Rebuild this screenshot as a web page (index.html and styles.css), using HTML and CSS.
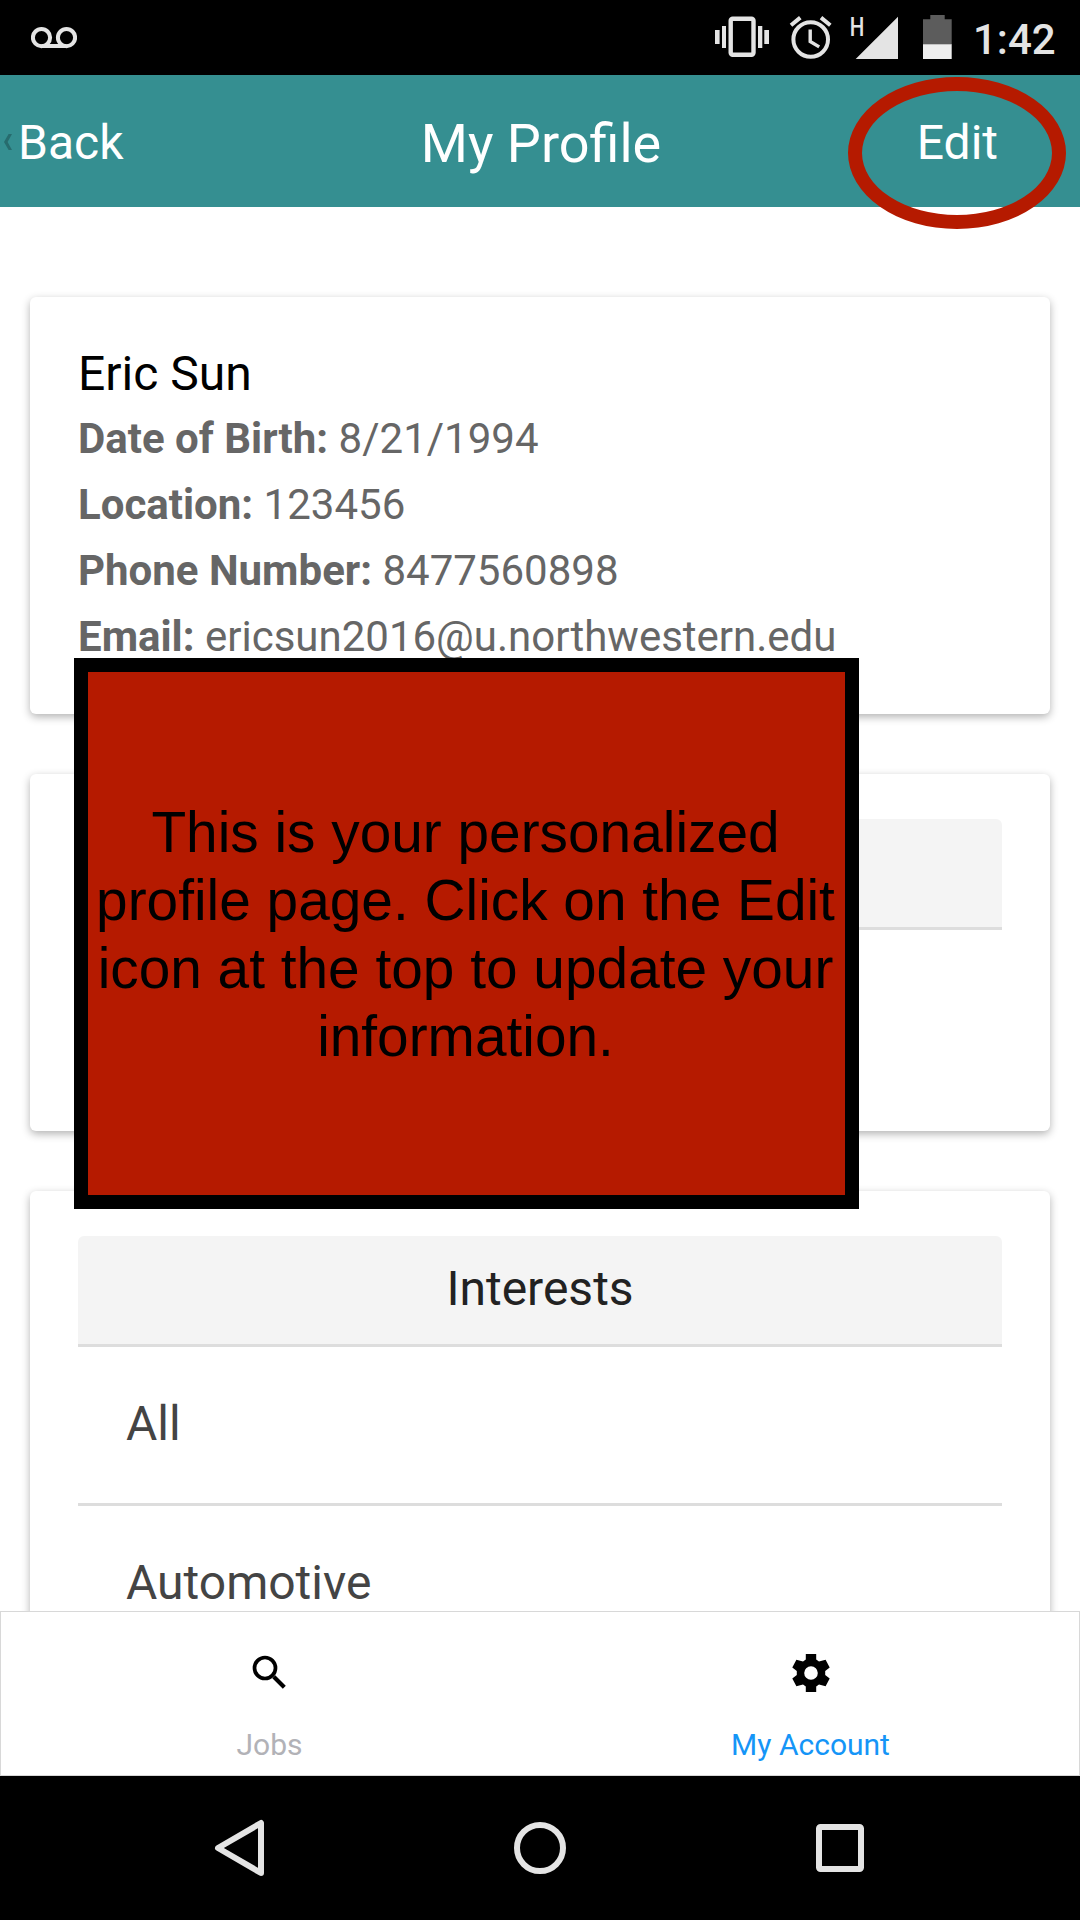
FILE: index.html
```html
<!DOCTYPE html>
<html lang="en">
<head>
<meta charset="utf-8">
<title>My Profile</title>
<link rel="stylesheet" href="styles.css">
</head>
<body>
<div class="screen">
  <div class="status-bar">
    <svg class="status-left" width="46" height="22" viewBox="31 26 46 22" fill="none" stroke="#e4e4e4" stroke-width="4">
      <circle cx="41.5" cy="36.6" r="8.6"/><circle cx="66.5" cy="36.6" r="8.6"/><path d="M41.5 45h25"/>
    </svg>
    <svg class="status-icons" width="240" height="75" viewBox="714 0 240 75">
      <g fill="#e4e4e4">
        <path d="M715 30h4.6v14H715zM722 26h4v22h-4zM758 26h4.3v22H758zM764.3 30h4.7v14h-4.7z"/>
        <path d="M855.7 59L898 16.7V59z"/>
      </g>
      <g fill="none" stroke="#e4e4e4" stroke-width="4.4">
        <rect x="730.7" y="18.8" width="22.8" height="36" rx="2"/>
        <circle cx="810.7" cy="39.5" r="17.3" stroke-width="4"/>
        <path d="M810.2 29.5v12l9 5.4" stroke-width="3.4"/>
        <path d="M791 25.3l9.3-7.7M821 17.6l9.3 7.7" stroke-width="4"/>
      </g>
      <text class="network" transform="translate(849.8 35.6) scale(.79 1)">H</text>
      <path fill="#5c5c5c" d="M930.3 15h14.4v4.3h7V45H923V19.3h7.3z"/>
      <path fill="#eee" d="M923 44.3h28.7V59H923z"/>
    </svg>
    <span class="clock">1:42</span>
  </div>

  <header class="header">
    <div class="header-back">
      <svg width="8" height="16" viewBox="0 0 8 16" fill="#276c6e"><path d="M4.6 0H8L3.6 8 8 16H4.6L0 8z"/></svg>
      <span>Back</span>
    </div>
    <h1 class="header-title">My Profile</h1>
    <span class="header-edit">Edit</span>
  </header>

  <main class="content">
    <section class="card card-profile">
      <h2 class="name">Eric Sun</h2>
      <p><b>Date of Birth:</b> 8/21/1994</p>
      <p><b>Location:</b> 123456</p>
      <p><b>Phone Number:</b> 8477560898</p>
      <p><b>Email:</b> ericsun2016@u.northwestern.edu</p>
    </section>
    <section class="card card-empty">
      <div class="card-heading"></div>
    </section>
    <section class="card">
      <div class="card-heading">Interests</div>
      <div class="row">All</div>
      <div class="row">Automotive</div>
    </section>
  </main>

  <nav class="tabs">
    <div class="tab tab-jobs">
      <svg width="44" height="44" viewBox="-22 -22 44 44" fill="none" stroke="#000">
        <circle cx="-5" cy="-5" r="10.5" stroke-width="3.7"/><path d="M3.8 3.8L14.3 14.3" stroke-width="4.2"/>
      </svg>
      <span>Jobs</span>
    </div>
    <div class="tab tab-active">
      <svg width="44" height="44" viewBox="-22 -22 44 44">
        <path fill-rule="evenodd" d="M-5.2-19H5.2V-13.4L8-11.4 14.6-13.2 18.7-5.6 14.2-2V2L18.7 5.6 14.6 13.2 8 11.4 5.2 13.4V19H-5.2V13.4L-8 11.4-14.6 13.2-18.7 5.6-14.2 2V-2L-18.7-5.6-14.6-13.2-8-11.4-5.2-13.4zM-6.8 0a6.8 6.8 0 1 0 13.6 0a6.8 6.8 0 1 0-13.6 0z"/>
      </svg>
      <span>My Account</span>
    </div>
  </nav>

  <div class="nav-bar">
    <svg width="60" height="60" viewBox="-30 -30 60 60"><path d="M21-25V25L-22 0z"/></svg>
    <svg width="60" height="60" viewBox="-30 -30 60 60"><circle r="23"/></svg>
    <svg width="60" height="60" viewBox="-30 -30 60 60"><rect x="-21" y="-21" width="42" height="42" rx="1.5"/></svg>
  </div>

  <div class="edit-ring"></div>
  <div class="callout">
    <span>This is your personalized</span>
    <span>profile page. Click on the Edit</span>
    <span>icon at the top to update your</span>
    <span>information.</span>
  </div>
</div>
</body>
</html>
```

FILE: styles.css
```css
* { box-sizing: border-box; }
body { margin: 0; font-family: Roboto, sans-serif; background: #fff; }
h1, h2, p { margin: 0; font-weight: 400; }
svg { display: block; flex: none; }

.screen {
  position: relative;
  width: 1080px;
  height: 1920px;
  overflow: hidden;
  display: flex;
  flex-direction: column;
}

.status-bar {
  flex: none;
  height: 75px;
  background: #000;
  display: flex;
  align-items: center;
  padding: 0 24px 0 31px;
}
.status-icons { margin-left: auto; margin-right: 19px; }
.network { font-size: 26px; font-weight: 500; fill: #e4e4e4; }
.clock {
  width: 83px;
  font-size: 42px;
  line-height: 48px;
  font-weight: 500;
  color: #e4e4e4;
  padding-top: 4px;
}

.header {
  flex: none;
  height: 132px;
  background: #358f91;
  color: #fff;
  display: grid;
  grid-template-columns: 1fr auto 1fr;
  align-items: center;
  padding: 4px 4px 0;
  font-size: 48px;
}
.header-back { display: flex; align-items: center; gap: 6px; padding-bottom: 2px; }
.header-title { font-size: 54px; padding-left: 2px; }
.header-edit { text-align: right; padding: 0 78px 2px 0; }

.content {
  flex: 1;
  min-height: 0;
  overflow: hidden;
  padding: 90px 30px 0;
  display: flex;
  flex-direction: column;
  gap: 60px;
}
.card {
  flex: none;
  padding: 45px 48px 0;
  border-radius: 6px;
  background: #fff;
  box-shadow: 0 3px 9px rgba(0, 0, 0, .3);
}
.card-profile {
  height: 417px;
  padding-top: 47px;
  font-size: 42px;
  line-height: 66px;
  color: #666;
}
.name { font-size: 48px; line-height: 60px; margin-bottom: 2px; color: #000; }
.card-empty { height: 357px; }
.card-heading {
  height: 111px;
  border-bottom: 3px solid #ddd;
  border-radius: 6px 6px 0 0;
  background: #f4f4f4;
  color: #222;
  font-size: 48px;
  line-height: 105px;
  text-align: center;
}
.row {
  height: 159px;
  padding: 0 48px;
  border-bottom: 3px solid #ddd;
  font-size: 48px;
  line-height: 153px;
  color: #444;
}

.tabs {
  flex: none;
  height: 165px;
  border: 1px solid #d8d8d8;
  background: #fff;
  display: flex;
}
.tab {
  flex: 1;
  display: flex;
  flex-direction: column;
  align-items: center;
  padding-top: 39px;
  gap: 32px;
  font-size: 30px;
  line-height: 36px;
  color: #b2b2b7;
}
.tab-jobs { padding-right: 4px; }
.tab-active { color: #1595f7; }

.nav-bar {
  flex: none;
  height: 144px;
  padding: 0 210px;
  background: #000;
  display: flex;
  align-items: center;
  justify-content: space-between;
}
.nav-bar svg { fill: none; stroke: #e4e4e4; stroke-width: 6; stroke-linejoin: round; }

/* Tutorial overlays */
.edit-ring {
  position: absolute;
  left: 848px;
  top: 77px;
  width: 218px;
  height: 152px;
  border: 14px solid #b51a00;
  border-radius: 50%;
}
.callout {
  position: absolute;
  left: 74px;
  top: 658px;
  width: 785px;
  height: 551px;
  padding: 3px 2px 0 0;
  border: 14px solid #000;
  background: #b51a00;
  color: #000;
  display: flex;
  flex-direction: column;
  align-items: center;
  justify-content: center;
  font-family: "Liberation Sans", Arial, sans-serif;
  font-size: 56.8px;
  line-height: 68px;
  white-space: nowrap;
}
```
